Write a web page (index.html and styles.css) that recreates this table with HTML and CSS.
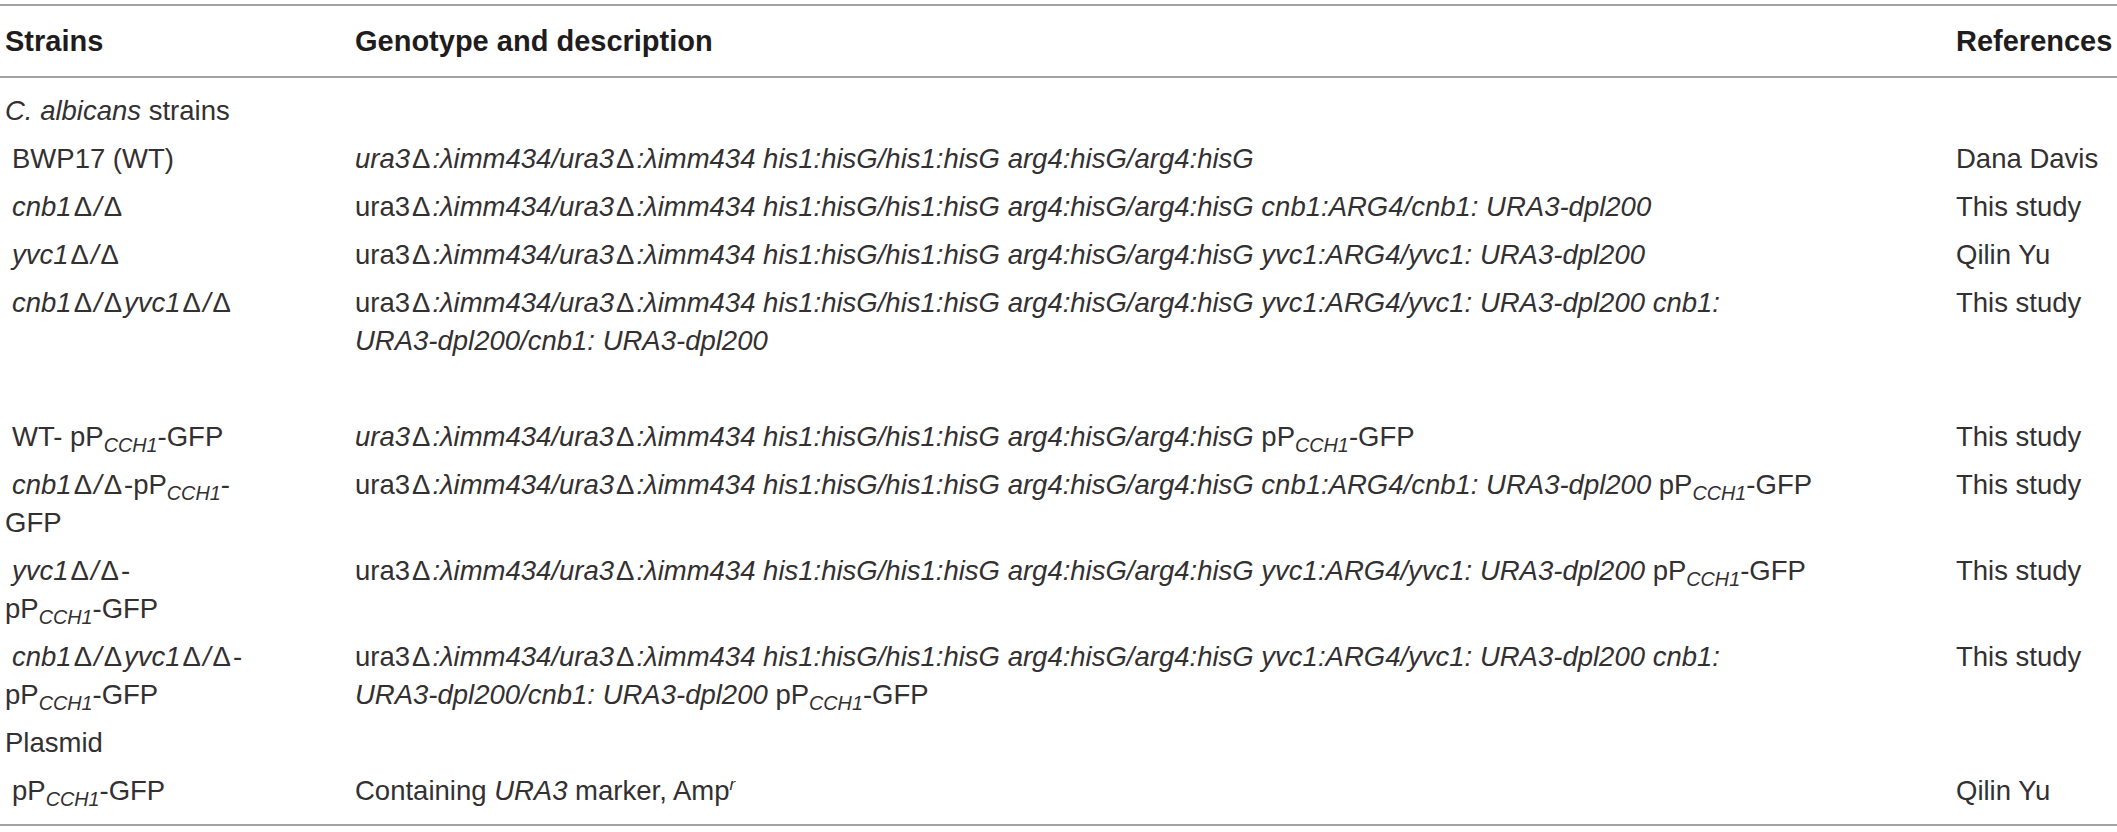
FILE: index.html
```html
<!DOCTYPE html>
<html lang="en">
<head>
<meta charset="utf-8">
<title>Strains and plasmids</title>
<link rel="stylesheet" href="styles.css">
</head>
<body>
<table class="strains">
  <colgroup>
    <col class="c-strain">
    <col class="c-geno">
    <col class="c-ref">
  </colgroup>
  <thead>
    <tr>
      <th>Strains</th>
      <th>Genotype and description</th>
      <th>References</th>
    </tr>
  </thead>
  <tbody>
    <tr class="first">
      <td><i>C. albicans</i> strains</td>
      <td></td>
      <td></td>
    </tr>
    <tr>
      <td class="ind">BWP17 (WT)</td>
      <td><i>ura3<span class="g">Δ</span>:λimm434/ura3<span class="g">Δ</span>:λimm434 his1:hisG/his1:hisG arg4:hisG/arg4:hisG</i></td>
      <td>Dana Davis</td>
    </tr>
    <tr>
      <td class="ind"><i>cnb1<span class="g">Δ</span>/<span class="g">Δ</span></i></td>
      <td>ura3<i><span class="g">Δ</span>:λimm434/ura3<span class="g">Δ</span>:λimm434 his1:hisG/his1:hisG arg4:hisG/arg4:hisG cnb1:ARG4/cnb1: URA3-dpl200</i></td>
      <td>This study</td>
    </tr>
    <tr>
      <td class="ind"><i>yvc1<span class="g">Δ</span>/<span class="g">Δ</span></i></td>
      <td>ura3<i><span class="g">Δ</span>:λimm434/ura3<span class="g">Δ</span>:λimm434 his1:hisG/his1:hisG arg4:hisG/arg4:hisG yvc1:ARG4/yvc1: URA3-dpl200</i></td>
      <td>Qilin Yu</td>
    </tr>
    <tr>
      <td class="ind"><i>cnb1<span class="g">Δ</span>/<span class="g">Δ</span>yvc1<span class="g">Δ</span>/<span class="g">Δ</span></i></td>
      <td>ura3<i><span class="g">Δ</span>:λimm434/ura3<span class="g">Δ</span>:λimm434 his1:hisG/his1:hisG arg4:hisG/arg4:hisG yvc1:ARG4/yvc1: URA3-dpl200 cnb1:<br>URA3-dpl200/cnb1: URA3-dpl200</i></td>
      <td>This study</td>
    </tr>
    <tr class="blank">
      <td>&nbsp;</td>
      <td></td>
      <td></td>
    </tr>
    <tr>
      <td class="ind">WT- pP<sub>CCH1</sub>-GFP</td>
      <td><i>ura3<span class="g">Δ</span>:λimm434/ura3<span class="g">Δ</span>:λimm434 his1:hisG/his1:hisG arg4:hisG/arg4:hisG</i> pP<sub>CCH1</sub>-GFP</td>
      <td>This study</td>
    </tr>
    <tr>
      <td class="ind"><i>cnb1<span class="g">Δ</span>/<span class="g">Δ</span></i>-pP<sub>CCH1</sub>-<br>GFP</td>
      <td>ura3<i><span class="g">Δ</span>:λimm434/ura3<span class="g">Δ</span>:λimm434 his1:hisG/his1:hisG arg4:hisG/arg4:hisG cnb1:ARG4/cnb1: URA3-dpl200</i> pP<sub>CCH1</sub>-GFP</td>
      <td>This study</td>
    </tr>
    <tr>
      <td class="ind"><i>yvc1<span class="g">Δ</span>/<span class="g">Δ</span></i>-<br>pP<sub>CCH1</sub>-GFP</td>
      <td>ura3<i><span class="g">Δ</span>:λimm434/ura3<span class="g">Δ</span>:λimm434 his1:hisG/his1:hisG arg4:hisG/arg4:hisG yvc1:ARG4/yvc1: URA3-dpl200</i> pP<sub>CCH1</sub>-GFP</td>
      <td>This study</td>
    </tr>
    <tr>
      <td class="ind"><i>cnb1<span class="g">Δ</span>/<span class="g">Δ</span>yvc1<span class="g">Δ</span>/<span class="g">Δ</span></i>-<br>pP<sub>CCH1</sub>-GFP</td>
      <td>ura3<i><span class="g">Δ</span>:λimm434/ura3<span class="g">Δ</span>:λimm434 his1:hisG/his1:hisG arg4:hisG/arg4:hisG yvc1:ARG4/yvc1: URA3-dpl200 cnb1:<br>URA3-dpl200/cnb1: URA3-dpl200</i> pP<sub>CCH1</sub>-GFP</td>
      <td>This study</td>
    </tr>
    <tr>
      <td>Plasmid</td>
      <td></td>
      <td></td>
    </tr>
    <tr class="last">
      <td class="ind">pP<sub>CCH1</sub>-GFP</td>
      <td>Containing <i>URA3</i> marker, Amp<sup>r</sup></td>
      <td>Qilin Yu</td>
    </tr>
  </tbody>
</table>
</body>
</html>
```

FILE: styles.css
```css
html, body {
  margin: 0;
  padding: 0;
  background: #ffffff;
}

body {
  padding-top: 4px;
  font-family: "Liberation Sans", Arial, sans-serif;
  color: #2e2b2c;
}

.strains {
  width: 2117px;
  border-collapse: collapse;
  table-layout: fixed;
  border-top: 2px solid #a3a3a3;
  border-bottom: 2px solid #a3a3a3;
}

.c-strain { width: 350px; }
.c-geno { width: 1601px; }
.c-ref { width: 166px; }

.strains th {
  font-size: 29px;
  font-weight: bold;
  text-align: left;
  line-height: 38px;
  padding: 16px 5px 16px 5px;
  border-bottom: 2px solid #a3a3a3;
  color: #1f1c1d;
}

.strains td {
  font-size: 27.5px;
  line-height: 38px;
  padding: 5px 5px;
  vertical-align: top;
  white-space: normal;
  color: #333031;
}

.strains tr.first td {
  padding-top: 14px;
}

.strains tr.last td {
  padding-bottom: 14px;
}

.ind {
  text-indent: 7px;
}

.g {
  font-style: normal;
  padding: 0 2px;
}

sub {
  font-size: 72%;
  font-style: italic;
  line-height: 0;
  vertical-align: -6px;
}

sup {
  font-size: 62%;
  font-style: italic;
  line-height: 0;
  vertical-align: 10px;
}
```
